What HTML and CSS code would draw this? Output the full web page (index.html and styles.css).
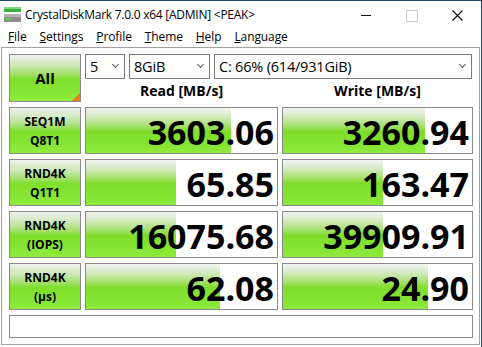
FILE: index.html
```html
<!DOCTYPE html>
<html lang="en">
  <head>
    <meta charset="utf-8">
    <title>CrystalDiskMark</title>
    <link rel="stylesheet" href="styles.css">
  </head>
  <body>
    <div class='window'>
        <div class='titlebar'>
            <svg class='appicon' width='18' height='16' viewBox='0 0 18 16'>
                <rect x='0' y='0' width='17' height='5' fill='#3cb043'/>
                <rect x='0' y='0' width='17' height='2' fill='#7ed87a'/>
                <rect x='0' y='7' width='17' height='8' fill='#8c8c8c'/>
                <rect x='0' y='7' width='17' height='3' fill='#b4b4b4'/>
                <rect x='2' y='11' width='5' height='2' fill='#5fd04a'/>
            </svg>
            <span class='title'>CrystalDiskMark 7.0.0 x64 [ADMIN] &lt;PEAK&gt;</span>
            <div class='controls'>
                <span class='ctl min'></span>
                <span class='ctl max'></span>
                <span class='ctl close'>
                    <svg width='11' height='11' viewBox='0 0 11 11'>
                        <path d='M0.5 0.5 L10.5 10.5 M10.5 0.5 L0.5 10.5' stroke='#111' stroke-width='1.1'/>
                    </svg>
                </span>
            </div>
        </div>
        <div class='menubar'>
            <span><u>F</u>ile</span>
            <span><u>S</u>ettings</span>
            <span><u>P</u>rofile</span>
            <span><u>T</u>heme</span>
            <span><u>H</u>elp</span>
            <span><u>L</u>anguage</span>
        </div>
        <div class='client'>
            <div class='grid'>
                <div class='btn allbtn'>All<span class='corner'></span></div>
                <div class='topright'>
                    <div class='selects'>
                        <div class='select s-count'><span>5</span><i class='arrow'></i></div>
                        <div class='select s-size'><span>8GiB</span><i class='arrow'></i></div>
                        <div class='select s-drive'><span>C: 66% (614/931GiB)</span><i class='arrow'></i></div>
                    </div>
                    <div class='heads'>
                        <div class='head'>Read [MB/s]</div>
                        <div class='head'>Write [MB/s]</div>
                    </div>
                </div>

                <div class='btn label'>SEQ1M<br>Q8T1</div>
                <div class='cell'><div class='bar' style='width:75.8%'></div><span class='val'>3603.06</span></div>
                <div class='cell'><div class='bar' style='width:75.2%'></div><span class='val'>3260.94</span></div>

                <div class='btn label'>RND4K<br>Q1T1</div>
                <div class='cell'><div class='bar' style='width:47%'></div><span class='val'>65.85</span></div>
                <div class='cell'><div class='bar' style='width:53%'></div><span class='val'>163.47</span></div>

                <div class='btn label'>RND4K<br>(IOPS)</div>
                <div class='cell'><div class='bar' style='width:47%'></div><span class='val'>16075.68</span></div>
                <div class='cell'><div class='bar' style='width:53%'></div><span class='val'>39909.91</span></div>

                <div class='btn label'>RND4K<br>(µs)</div>
                <div class='cell'><div class='bar' style='width:70%'></div><span class='val'>62.08</span></div>
                <div class='cell'><div class='bar' style='width:76.7%'></div><span class='val'>24.90</span></div>

                <div class='comment'></div>
            </div>
        </div>
    </div>
  </body>
</html>
```

FILE: styles.css
```css
* {
    box-sizing: border-box;
}
body, html {
    margin: 0;
    padding: 0;
    height: 100%;
    overflow: hidden;
    background: #fff;
}
body {
    color: #000;
    font: 12px/1.2 'Open Sans', 'Noto Sans', 'DejaVu Sans', sans-serif;
}
.window {
    width: 482px;
    height: 347px;
    border-right: 1px solid #1d4a6c;
    border-top: 1px solid #1d4a6c;
    display: flex;
    flex-direction: column;
}
.titlebar {
    height: 29px;
    display: flex;
    align-items: center;
    padding-left: 4px;
}
.appicon {
    margin-top: -2px;
}
.title {
    margin-left: 3px;
    font-size: 12px;
    letter-spacing: -0.25px;
}
.controls {
    margin-left: auto;
    display: flex;
    height: 100%;
}
.ctl {
    width: 46px;
    height: 100%;
    display: flex;
    align-items: center;
    justify-content: center;
}
.min:before {
    content: '';
    width: 10px;
    height: 1px;
    background: #111;
}
.max:before {
    content: '';
    width: 10px;
    height: 10px;
    border: 1px solid #c8c8c8;
}
.close {
    padding-right: 2px;
}
.menubar {
    height: 17px;
    display: flex;
    align-items: center;
    padding-left: 8px;
    font-size: 12px;
    letter-spacing: -0.1px;
    margin-top: -1px;
}
.menubar span {
    margin-right: 13px;
}
.menubar u {
    text-underline-offset: 1px;
}
.client {
    flex: 1;
    margin: 1px 1px 2px 1px;
    border: 1px solid #a0a0a0;
    padding: 6px 6px 0 7px;
}
.grid {
    display: grid;
    grid-template-columns: 72px 193px 191px;
    grid-template-rows: 48px 47px 47px 47px 47px 23px;
    column-gap: 4px;
    row-gap: 5px;
}
.btn {
    border: 1px solid #8a8a8a;
    background: linear-gradient(to bottom, #eef2ec 0%, #cfe7bb 22%, #a2df68 42%, #80df2c 52%, #86e534 80%, #8fec3e 100%);
    display: flex;
    align-items: center;
    justify-content: center;
    text-align: center;
    font-weight: 700;
}
.allbtn {
    position: relative;
    font-size: 15px;
}
.corner {
    position: absolute;
    right: 0;
    bottom: 0;
    width: 0;
    height: 0;
    border-left: 8px solid transparent;
    border-bottom: 8px solid #f07818;
}
.label {
    font-size: 12px;
    line-height: 19px;
}
.topright {
    grid-column: 2 / 4;
    display: flex;
    flex-direction: column;
}
.selects {
    display: flex;
    gap: 4px;
    height: 25px;
}
.select {
    border: 1px solid #7a7a7a;
    display: flex;
    align-items: center;
    padding: 0 6px 0 4px;
    font-size: 14.5px;
    letter-spacing: -0.2px;
}
.select span {
    flex: 1;
}
.s-count {
    width: 40px;
}
.s-size {
    width: 81px;
}
.s-drive {
    flex: 1;
    margin-right: 1px;
}
.arrow {
    width: 5px;
    height: 5px;
    border-right: 1px solid #555;
    border-bottom: 1px solid #555;
    transform: rotate(45deg);
    margin-top: -4px;
}
.heads {
    flex: 1;
    display: grid;
    grid-template-columns: 193px 191px;
    column-gap: 4px;
    align-items: center;
}
.head {
    text-align: center;
    font-weight: 700;
    font-size: 14px;
    padding-top: 2px;
}
.cell {
    position: relative;
    border: 1px solid #8a8a8a;
    background: #fff;
    display: flex;
    align-items: center;
    justify-content: flex-end;
    overflow: hidden;
}
.bar {
    position: absolute;
    left: 0;
    top: 0;
    bottom: 0;
    background: linear-gradient(to bottom, #f2f4f0 0%, #d3e9c0 20%, #a6e06c 40%, #7fdd2a 52%, #85e332 80%, #8eeb3c 100%);
}
.val {
    position: relative;
    font-weight: 700;
    font-size: 34px;
    padding-right: 3px;
    line-height: 1;
    margin-top: 2px;
}
.comment {
    grid-column: 1 / 4;
    border: 1px solid #8a8a8a;
}
```
